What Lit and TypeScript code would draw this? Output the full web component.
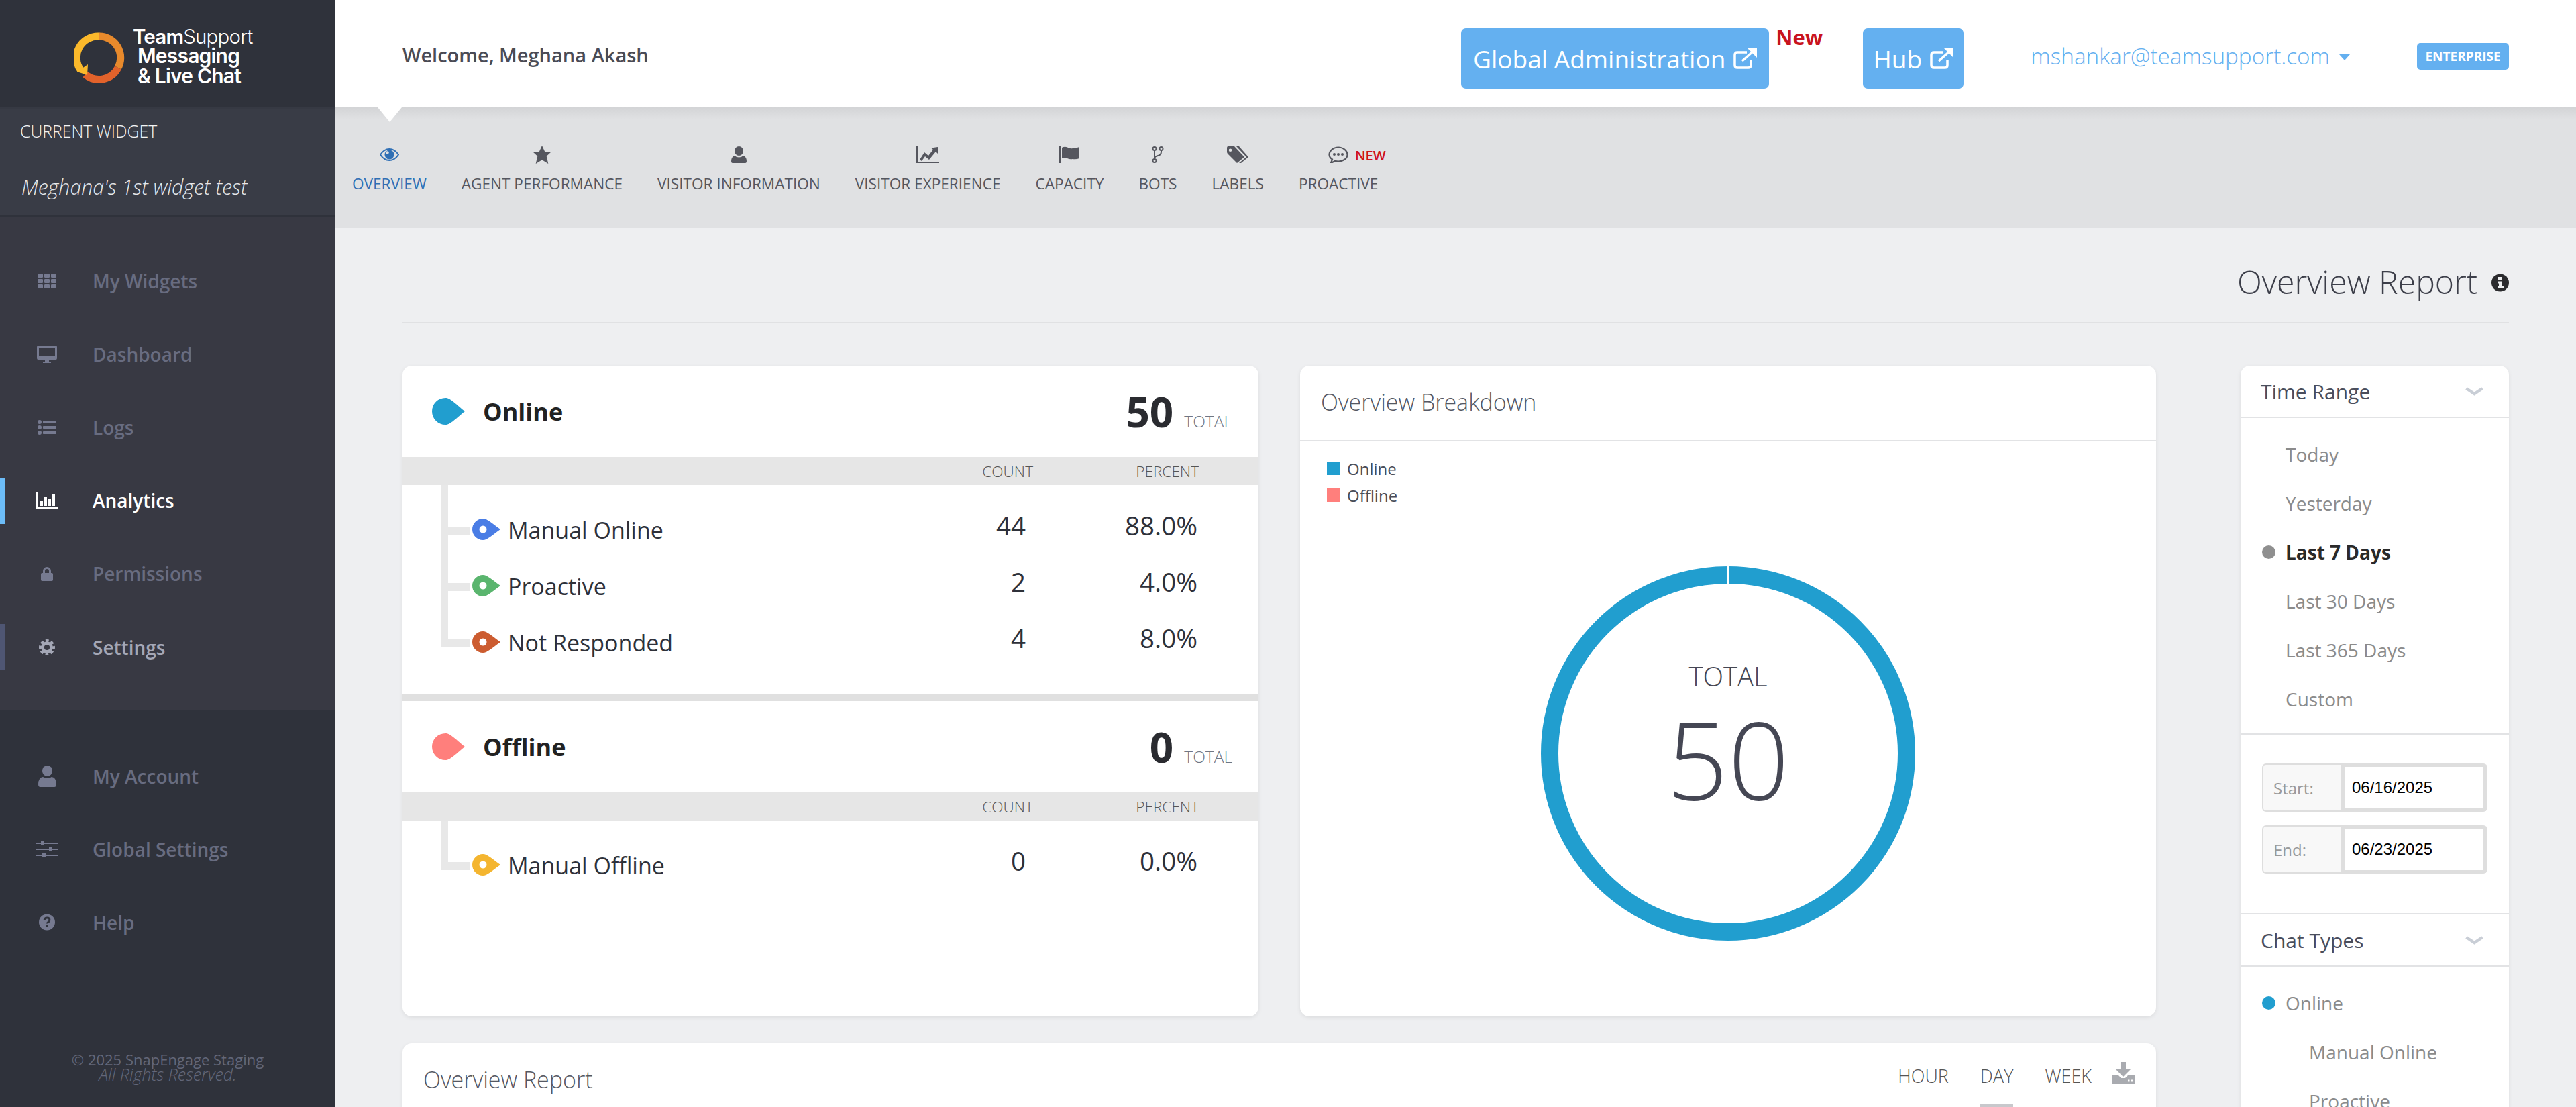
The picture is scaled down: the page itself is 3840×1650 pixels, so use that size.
import { LitElement, html, css, svg } from 'lit';
import { customElement } from 'lit/decorators.js';

const SANS = css`'Open Sans', 'Noto Sans', sans-serif`;

// icons, drawn by hand to follow the reference glyphs
const icons: Record<string, ReturnType<typeof svg>> = {
  grid: svg`<g fill="currentColor"><rect x="0" y="0" width="8" height="6" rx="1.2"/><rect x="10" y="0" width="8" height="6" rx="1.2"/><rect x="20" y="0" width="8" height="6" rx="1.2"/><rect x="0" y="8" width="8" height="6" rx="1.2"/><rect x="10" y="8" width="8" height="6" rx="1.2"/><rect x="20" y="8" width="8" height="6" rx="1.2"/><rect x="0" y="16" width="8" height="6" rx="1.2"/><rect x="10" y="16" width="8" height="6" rx="1.2"/><rect x="20" y="16" width="8" height="6" rx="1.2"/></g>`,
  desktop: svg`<path fill="currentColor" fill-rule="evenodd" d="M2 0H28Q30 0 30 2V19Q30 21 28 21H18V24H21V26H9V24H12V21H2Q0 21 0 19V2Q0 0 2 0ZM3 3V16H27V3Z"/>`,
  list: svg`<g fill="currentColor"><circle cx="3" cy="3" r="3"/><circle cx="3" cy="11" r="3"/><circle cx="3" cy="19" r="3"/><rect x="8" y="1" width="20" height="4" rx=".8"/><rect x="8" y="9" width="20" height="4" rx=".8"/><rect x="8" y="17" width="20" height="4" rx=".8"/></g>`,
  bars: svg`<g fill="currentColor"><path d="M0 0H2V22H32V24H0Z"/><rect x="6" y="13" width="4" height="7"/><rect x="12" y="7" width="4" height="13"/><rect x="18" y="10" width="4" height="10"/><rect x="24" y="3" width="4" height="17"/></g>`,
  lock: svg`<path fill="currentColor" fill-rule="evenodd" d="M3 10V7A6 6 0 0 1 15 7V10H16Q18 10 18 12V20Q18 22 16 22H2Q0 22 0 20V12Q0 10 2 10ZM6 10H12V7A3 3 0 0 0 6 7Z"/>`,
  gear: svg`<g fill="none" stroke="currentColor"><circle cx="12" cy="12" r="6.4" stroke-width="4.6"/><circle cx="12" cy="12" r="10" stroke-width="4" stroke-dasharray="4.6 3.25" stroke-dashoffset="2.3"/></g>`,
  user: svg`<g fill="currentColor"><ellipse cx="13.5" cy="8" rx="7.5" ry="8"/><path d="M3 32Q0 32 0 28Q0 18 7 17Q10 19 13.5 19Q17 19 20 17Q27 18 27 28Q27 32 24 32Z"/></g>`,
  sliders: svg`<g fill="currentColor"><rect x="0" y="3" width="32" height="2"/><rect x="0" y="12" width="32" height="2"/><rect x="0" y="21" width="32" height="2"/><rect x="7" y="0" width="5" height="7" rx="1"/><rect x="19" y="9" width="5" height="7" rx="1"/><rect x="8" y="18" width="6" height="7" rx="1"/></g>`,
  help: svg`<circle cx="12" cy="12.5" r="12" fill="currentColor"/><path d="M8 9.5Q8.5 6 12.2 6Q16 6 16 9.2Q16 11 14 12.2Q12.4 13.2 12.4 14.5" fill="none" stroke="var(--cut)" stroke-width="2.8"/><rect x="10.8" y="16.2" width="3.2" height="3.2" fill="var(--cut)"/>`,
  eye: svg`<path d="M1 9.5C5 3.5 9.5 1 14.5 1S24 3.5 28 9.5C24 15.5 19.5 18 14.5 18S5 15.5 1 9.5Z" fill="none" stroke="currentColor" stroke-width="2"/><circle cx="14.5" cy="9.5" r="7" fill="currentColor"/><circle cx="11.5" cy="6.5" r="2.2" fill="#e0e1e3"/>`,
  star: svg`<path fill="currentColor" d="M14 0L18.2 9H28L20.7 15.8L23.3 27L14 21.3L4.7 27L7.3 15.8L0 9H9.8Z"/>`,
  person: svg`<g fill="currentColor"><ellipse cx="11.5" cy="7" rx="6.5" ry="7"/><path d="M2 25Q0 25 0 22Q0 16 5 14Q8 16.5 11.5 16.5Q15 16.5 18 14Q23 16 23 22Q23 25 21 25Z"/></g>`,
  chart: svg`<g fill="currentColor"><path d="M0 0H2V23H34V25H0Z"/><path d="M5 20L12 9L18 14L25 5L22 2.5L32 1V11L29 8L19 20L13 15L8 22Z"/></g>`,
  flag: svg`<g fill="currentColor"><rect x="0" y="0" width="2.5" height="25"/><path d="M4 2Q8 0 12 1.5Q16 4 20 3Q25 3 30 1V18Q25 20 20 19Q16 20 12 18Q8 16.5 4 18Z"/></g>`,
  fork: svg`<g fill="none" stroke="currentColor" stroke-width="2"><circle cx="4" cy="3.5" r="2.5"/><circle cx="4" cy="21.5" r="2.5"/><circle cx="14" cy="3.5" r="2.5"/><path d="M4 6V19M14 6V8Q14 13 9 14Q5 15 4 17"/></g>`,
  tags: svg`<g fill="currentColor"><path fill-rule="evenodd" d="M0 2Q0 0 2 0H11L26 16L15 25L1 11Q0 10 0 8ZM5 3.5A2.3 2.3 0 1 0 5 8.1A2.3 2.3 0 1 0 5 3.5Z"/><path d="M14 0H18L32 16L21 25H18L29 16Z"/></g>`,
  comment: svg`<path d="M15 1.5C22.5 1.5 28.5 6.8 28.5 12.5S22.5 22.5 15 22.5C13.5 22.5 12 22.3 10.5 21.8L4 25L6 19.5C3 17.5 1.5 15 1.5 12.5C1.5 6.8 7.5 1.5 15 1.5Z" fill="none" stroke="currentColor" stroke-width="2.2"/><g fill="currentColor"><circle cx="9" cy="12" r="2"/><circle cx="15" cy="12" r="2"/><circle cx="21" cy="12" r="2"/></g>`,
  external: svg`<g fill="none" stroke="currentColor" stroke-width="3.5"><path d="M20 6H6Q2 6 2 10V25Q2 29 6 29H22Q26 29 26 25V17"/><path d="M13 19L31 3"/></g><path d="M21 0H35V14L30 9L26 5Z" fill="currentColor"/>`,
  info: svg`<circle cx="13" cy="13.5" r="13" fill="#2b2b2e"/><rect x="10" y="5" width="6" height="4.5" fill="#eeeff1"/><path d="M9 11.5H16V19H18V22H9V19H11V14.5H9Z" fill="#eeeff1"/>`,
  download: svg`<g fill="currentColor"><path d="M13 0H21V11H28L17 22L6 11H13Z"/><path fill-rule="evenodd" d="M0 20H10L14 24H20L24 20H34V32H0ZM24 26.5V28.5H26.5V26.5ZM28.5 26.5V28.5H31V26.5Z"/></g>`,
};

function icon(name: string, w: number, h: number, vb = `0 0 ${w} ${h}`) {
  return html`<svg class="icon" width=${w} height=${h} viewBox=${vb}>${icons[name]}</svg>`;
}

function marker(color: string) {
  return html`<svg class="marker" width="42" height="32" viewBox="0 0 42 32">
    <path fill=${color} d="M16 0C22 0 28 6 42 16C28 26 22 32 16 32A16 16 0 0 1 16 0Z" />
    <circle cx="16" cy="16" r="5.5" fill="#fff" />
  </svg>`;
}

function drop(color: string) {
  return html`<svg width="49" height="40" viewBox="0 0 49 40">
    <path fill=${color} d="M20 0C27 0 33 7 49 20C33 33 27 40 20 40A20 20 0 0 1 20 0Z" />
  </svg>`;
}

const chevron = html`<svg width="27" height="13" viewBox="0 0 27 13">
  <path d="M1.5 2L13.5 10L25.5 2" fill="none" stroke="#c9ced6" stroke-width="4.5" />
</svg>`;

@customElement('app-side')
class AppSide extends LitElement {
  static styles = css`
    :host {
      display: flex;
      flex-direction: column;
      width: 500px;
      flex: none;
      height: 1650px;
      background: #2f323b;
      font-family: ${SANS};
    }
    .logo {
      height: 160px;
      display: flex;
      align-items: center;
      padding-left: 110px;
      gap: 17px;
      box-sizing: border-box;
    }
    .logo svg {
      margin-top: 12px;
    }
    .logo-text {
      margin-top: 8px;
      font-family: Inter, sans-serif;
      color: #fff;
      font-size: 30px;
      line-height: 29.5px;
      font-weight: 600;
      letter-spacing: -0.8px;
    }
    .logo-text .brand {
      margin-left: -7px;
      font-size: 29.5px;
    }
    .logo-text .brand span {
      font-weight: 300;
    }
    .current {
      height: 164px;
      box-sizing: border-box;
      background: #393c46;
      border-top: 3px solid #363943;
      border-bottom: 4px solid #2f323b;
      padding: 15px 0 0 30px;
      color: #fff;
    }
    .current-label {
      font-size: 24.8px;
      line-height: 34px;
      font-weight: 300;
      color: #f2f3f5;
    }
    .current-name {
      margin: 47px 0 0 2px;
      font-size: 30.3px;
      line-height: 40px;
      font-style: italic;
      font-weight: 300;
      color: #e6e7ea;
    }
    .top-nav {
      background: #383943;
      height: 734px;
      padding-top: 40px;
      box-sizing: border-box;
    }
    .bottom-nav {
      padding-top: 44px;
    }
    .item {
      position: relative;
      height: 109.2px;
      display: flex;
      align-items: center;
      color: #686c80;
      font-size: 28px;
      font-weight: 600;
    }
    .item.on {
      color: #fff;
    }
    .item.sub {
      color: #a4a7b6;
    }
    .item.on::before,
    .item.sub::before {
      content: '';
      position: absolute;
      left: 0;
      top: 20px;
      bottom: 20px;
      width: 8px;
      background: #6cbcf7;
    }
    .item.sub::before {
      background: #4f5673;
    }
    .item-icon {
      width: 140px;
      margin-right: -2px;
      display: flex;
      justify-content: center;
      flex: none;
      color: #767a90;
      --cut: #2f323b;
    }
    .item.on .item-icon {
      color: #fff;
    }
    .item.sub .item-icon {
      color: #a4a7b6;
    }
    .icon {
      display: block;
    }
    .foot {
      margin-top: auto;
      padding-bottom: 38px;
      text-align: center;
      color: #636779;
      font-size: 22px;
      line-height: 22px;
    }
    .foot em {
      display: block;
      font-size: 25px;
      font-weight: 300;
    }
  `;

  render() {
    const top = [
      ['My Widgets', 'grid', 28, 22, ''],
      ['Dashboard', 'desktop', 30, 26, ''],
      ['Logs', 'list', 28, 22, ''],
      ['Analytics', 'bars', 32, 24, 'on'],
      ['Permissions', 'lock', 18, 22, ''],
      ['Settings', 'gear', 24, 24, 'sub'],
    ] as const;
    const bottom = [
      ['My Account', 'user', 27, 32],
      ['Global Settings', 'sliders', 32, 25],
      ['Help', 'help', 24, 25],
    ] as const;
    return html`
      <div class="logo">
        <svg width="78" height="76" viewBox="0 0 78 76">
          <g fill="none" stroke-width="11">
            <path d="M10.5 57A32 32 0 0 1 38 6" stroke="#fbb92b" />
            <path d="M38 6A32 32 0 0 1 66 53" stroke="#e88a2c" />
            <path d="M66 53A32 32 0 0 1 17 63" stroke="#e2622b" />
          </g>
          <path d="M5 59L21 48L20 64Z" fill="#fbb92b" />
        </svg>
        <div class="logo-text">
          <div class="brand">Team<span>Support</span></div>
          <div>Messaging</div>
          <div>&amp; Live Chat</div>
        </div>
      </div>
      <div class="current">
        <div class="current-label">CURRENT WIDGET</div>
        <div class="current-name">Meghana's 1st widget test</div>
      </div>
      <div class="top-nav">
        ${top.map(
          ([label, name, w, h, cls]) => html`<div class="item ${cls}">
            <span class="item-icon" style="--cut:#383943">${icon(name, w, h)}</span>${label}
          </div>`
        )}
      </div>
      <div class="bottom-nav">
        ${bottom.map(
          ([label, name, w, h]) => html`<div class="item">
            <span class="item-icon">${icon(name, w, h)}</span>${label}
          </div>`
        )}
      </div>
      <div class="foot">
        © 2025 SnapEngage Staging
        <em>All Rights Reserved.</em>
      </div>
    `;
  }
}

@customElement('app-top')
class AppTop extends LitElement {
  static styles = css`
    :host {
      display: block;
      font-family: ${SANS};
    }
    header {
      height: 160px;
      background: #fff;
      display: flex;
      align-items: center;
      padding: 0 100px;
    }
    .welcome {
      font-size: 29px;
      font-weight: 600;
      color: #4a4b55;
      margin-top: 3px;
    }
    .btn {
      display: flex;
      align-items: center;
      justify-content: center;
      width: 150px;
      height: 90px;
      box-sizing: border-box;
      background: #64b0f0;
      color: #fff;
      border-radius: 7px;
      font-size: 37px;
      font-weight: 500;
      gap: 12px;
      margin-top: 14px;
    }
    .btn.admin {
      width: 459px;
      margin-left: auto;
    }
    .new {
      align-self: flex-start;
      margin: 33px 60px 0 10px;
      color: #c9141e;
      font-size: 31px;
      font-weight: 700;
      line-height: 44px;
    }
    .email {
      margin-left: 100px;
      color: #64b0f0;
      font-size: 33.3px;
      font-weight: 300;
      display: flex;
      align-items: center;
      gap: 14px;
      margin-top: 5px;
    }
    .caret {
      width: 0;
      height: 0;
      border-left: 8px solid transparent;
      border-right: 8px solid transparent;
      border-top: 9px solid #64b0f0;
      margin-top: 5px;
    }
    .badge {
      margin-left: 100px;
      width: 137px;
      height: 40px;
      background: #64b0f0;
      color: #fff;
      border-radius: 5px;
      font-size: 19px;
      font-weight: 700;
      display: flex;
      align-items: center;
      justify-content: center;
      margin-top: 8px;
    }
    nav {
      position: relative;
      height: 180px;
      box-sizing: border-box;
      background: linear-gradient(#d3d4d6, #e0e1e3 18px);
      display: flex;
      gap: 52px;
      padding: 56px 0 0 25px;
    }
    .pointer {
      position: absolute;
      left: 63px;
      top: 0;
      width: 0;
      height: 0;
      border-left: 18px solid transparent;
      border-right: 18px solid transparent;
      border-top: 22px solid #fff;
    }
    .tab {
      position: relative;
      display: flex;
      flex-direction: column;
      align-items: center;
      color: #55565e;
      font-size: 22.6px;
      line-height: 30px;
      font-weight: 500;
      white-space: nowrap;
    }
    .tab.on {
      color: #2f6fb5;
    }
    .tab-icon {
      height: 28px;
      display: flex;
      align-items: center;
      margin-bottom: 15px;
    }
    .tag-new {
      position: absolute;
      left: 84px;
      top: 1px;
      color: #d0121c;
      font-size: 20px;
      font-weight: 600;
    }
    .icon {
      display: block;
    }
  `;

  render() {
    const tabs = [
      ['OVERVIEW', 'eye', 29, 19],
      ['AGENT PERFORMANCE', 'star', 28, 27],
      ['VISITOR INFORMATION', 'person', 23, 25],
      ['VISITOR EXPERIENCE', 'chart', 34, 25],
      ['CAPACITY', 'flag', 30, 25],
      ['BOTS', 'fork', 18, 25],
      ['LABELS', 'tags', 32, 25],
      ['PROACTIVE', 'comment', 30, 25],
    ] as const;
    return html`
      <header>
        <div class="welcome">Welcome, Meghana Akash</div>
        <div class="btn admin">Global Administration ${icon('external', 35, 31)}</div>
        <div class="new">New</div>
        <div class="btn">Hub ${icon('external', 35, 31)}</div>
        <div class="email">mshankar@teamsupport.com <span class="caret"></span></div>
        <div class="badge">ENTERPRISE</div>
      </header>
      <nav>
        <span class="pointer"></span>
        ${tabs.map(
          ([label, name, w, h], i) => html`<div class="tab ${i === 0 ? 'on' : ''}">
            <span class="tab-icon">${icon(name, w, h)}</span>${label}
            ${label === 'PROACTIVE' ? html`<span class="tag-new">NEW</span>` : ''}
          </div>`
        )}
      </nav>
    `;
  }
}

type Row = { name: string; color: string; count: number; pct: string };

@customElement('stat-card')
class StatCard extends LitElement {
  static styles = css`
    :host {
      display: block;
      width: 1276px;
      height: 970px;
      background: #fff;
      border-radius: 14px;
      box-shadow: 0 2px 6px rgba(0, 0, 0, 0.08);
      overflow: hidden;
      font-family: ${SANS};
      color: #2e313a;
    }
    .head {
      height: 136px;
      display: flex;
      align-items: center;
      padding: 0 39px 0 44px;
    }
    .head-name {
      margin-left: 27px;
      font-size: 36px;
      font-weight: 700;
      color: #222;
    }
    .head-total {
      margin-left: auto;
      display: flex;
      align-items: baseline;
      gap: 16px;
      font-size: 62px;
      font-weight: 700;
      color: #2a2b30;
    }
    .head-total small {
      font-size: 24.5px;
      font-weight: 300;
      color: #6f7785;
    }
    .cols {
      height: 42px;
      background: #e6e6e6;
      display: grid;
      grid-template-columns: 1fr auto 247px;
      align-items: center;
      padding-right: 89px;
      font-size: 22.6px;
      font-weight: 300;
      color: #555;
      text-align: right;
    }
    .rows {
      position: relative;
      padding-top: 25px;
      height: 312px;
      box-sizing: border-box;
    }
    .rows::before {
      content: '';
      position: absolute;
      left: 58px;
      top: 0;
      bottom: 70px;
      width: 10px;
      background: #e8e8e8;
    }
    .rows.single {
      height: 292px;
    }
    .rows.single::before {
      bottom: 218px;
    }
    .row {
      position: relative;
      height: 84px;
      display: grid;
      grid-template-columns: 42px 1fr auto 256px;
      align-items: center;
      padding: 0 91px 0 104px;
      font-size: 34px;
    }
    .row::before {
      content: '';
      position: absolute;
      left: 58px;
      top: 37px;
      width: 42px;
      height: 12px;
      background: #e8e8e8;
    }
    .marker {
      display: block;
      margin-top: -2px;
    }
    .row-name {
      margin-left: 11px;
      font-weight: 400;
    }
    .num {
      text-align: right;
      font-size: 38.5px;
      font-weight: 500;
      margin-top: -14px;
    }
    .divider {
      height: 10px;
      background: #e0e0e0;
    }
  `;

  render() {
    const online: Row[] = [
      { name: 'Manual Online', color: '#4a7de5', count: 44, pct: '88.0%' },
      { name: 'Proactive', color: '#5ab56e', count: 2, pct: '4.0%' },
      { name: 'Not Responded', color: '#cc5c30', count: 4, pct: '8.0%' },
    ];
    const offline: Row[] = [{ name: 'Manual Offline', color: '#f4b52f', count: 0, pct: '0.0%' }];
    const block = (name: string, color: string, total: number, rows: Row[], cls: string) => html`
      <div class="head">
        ${drop(color)}
        <span class="head-name">${name}</span>
        <span class="head-total">${total} <small>TOTAL</small></span>
      </div>
      <div class="cols"><span></span><span>COUNT</span><span>PERCENT</span></div>
      <div class="rows ${cls}">
        ${rows.map(
          (r) => html`<div class="row">
            ${marker(r.color)}
            <span class="row-name">${r.name}</span>
            <span class="num">${r.count}</span>
            <span class="num">${r.pct}</span>
          </div>`
        )}
      </div>
    `;
    return html`
      ${block('Online', '#219ecf', 50, online, '')}
      <div class="divider"></div>
      ${block('Offline', '#ff7f7c', 0, offline, 'single')}
    `;
  }
}

@customElement('donut-card')
class DonutCard extends LitElement {
  static styles = css`
    :host {
      display: block;
      width: 1276px;
      height: 970px;
      background: #fff;
      border-radius: 14px;
      box-shadow: 0 2px 6px rgba(0, 0, 0, 0.08);
      font-family: ${SANS};
    }
    .title {
      height: 113px;
      box-sizing: border-box;
      border-bottom: 2px solid #e2e3e5;
      display: flex;
      align-items: center;
      padding: 0 0 4px 31px;
      font-size: 34px;
      font-weight: 300;
      color: #555863;
    }
    .legend {
      padding: 20px 0 0 40px;
      height: 186px;
      box-sizing: border-box;
    }
    .key {
      display: flex;
      align-items: center;
      gap: 10px;
      height: 40px;
      font-size: 24px;
      color: #4a4d58;
    }
    .swatch {
      width: 20px;
      height: 20px;
    }
    .ring {
      position: relative;
      width: 558px;
      height: 558px;
      margin: 0 auto;
      box-sizing: border-box;
      display: flex;
      flex-direction: column;
      align-items: center;
      color: #454754;
      font-weight: 300;
    }
    .ring svg {
      position: absolute;
      left: 0;
      top: 0;
    }
    .ring-label {
      margin-top: 136px;
      font-size: 40px;
      line-height: 56px;
    }
    .ring-value {
      font-size: 160px;
      line-height: 180px;
      margin-top: 4px;
    }
  `;

  render() {
    return html`
      <div class="title">Overview Breakdown</div>
      <div class="legend">
        <div class="key"><span class="swatch" style="background:#219ecf"></span>Online</div>
        <div class="key"><span class="swatch" style="background:#ff7f7c"></span>Offline</div>
      </div>
      <div class="ring">
        <svg width="558" height="558" viewBox="0 0 558 558">
          <circle cx="279" cy="279" r="266" fill="none" stroke="#219ecf" stroke-width="26" />
          <rect x="278" y="0" width="2" height="27" fill="#fff" />
        </svg>
        <div class="ring-label">TOTAL</div>
        <div class="ring-value">50</div>
      </div>
    `;
  }
}

@customElement('filter-panel')
class FilterPanel extends LitElement {
  static styles = css`
    :host {
      display: block;
      width: 400px;
      flex: none;
      background: #fff;
      border-radius: 14px 14px 0 0;
      box-shadow: 0 2px 6px rgba(0, 0, 0, 0.08);
      font-family: ${SANS};
      font-size: 28px;
      color: #8b8b8b;
    }
    .head {
      height: 78px;
      box-sizing: border-box;
      border-bottom: 2px solid #e2e3e5;
      display: flex;
      align-items: center;
      justify-content: space-between;
      padding: 0 38px 0 30px;
      font-size: 30px;
      color: #4a4e5c;
    }
    .list {
      padding: 17px 0 15px;
      border-bottom: 2px solid #e2e3e5;
    }
    .list.open {
      border-bottom: 0;
    }
    .opt {
      position: relative;
      height: 73px;
      display: flex;
      align-items: center;
      padding-left: 67px;
    }
    .opt.child {
      padding-left: 102px;
    }
    .opt.on {
      color: #2a2a2a;
      font-weight: 700;
    }
    .dot {
      position: absolute;
      left: 32px;
      top: 27px;
      width: 20px;
      height: 20px;
      border-radius: 50%;
      background: #8f8f8f;
    }
    .dot.blue {
      background: #219ecf;
    }
    .dates {
      padding: 43px 32px 0;
      height: 268px;
      box-sizing: border-box;
      border-bottom: 2px solid #e2e3e5;
    }
    .date {
      display: flex;
      height: 72px;
      margin-bottom: 20px;
      background: #dedede;
      border-radius: 6px;
      padding: 2px 6px 2px 2px;
      box-sizing: border-box;
    }
    .date label {
      width: 115px;
      box-sizing: border-box;
      padding-left: 15px;
      background: #f8f8f8;
      display: flex;
      align-items: center;
      font-size: 24px;
      color: #999;
      border-radius: 4px 0 0 4px;
    }
    .date input {
      width: 207px;
      margin: 3px 0 3px 6px;
      border: 0;
      padding: 0 0 0 11px;
      box-sizing: border-box;
      background: #fff;
      font-family: 'Liberation Sans', Arial, sans-serif;
      font-size: 24px;
      color: #000;
    }
  `;

  render() {
    const ranges = ['Today', 'Yesterday', 'Last 7 Days', 'Last 30 Days', 'Last 365 Days', 'Custom'];
    return html`
      <div class="head">Time Range ${chevron}</div>
      <div class="list">
        ${ranges.map(
          (r) => html`<div class="opt ${r === 'Last 7 Days' ? 'on' : ''}">
            ${r === 'Last 7 Days' ? html`<span class="dot"></span>` : ''}${r}
          </div>`
        )}
      </div>
      <div class="dates">
        <div class="date"><label>Start:</label><input value="06/16/2025" /></div>
        <div class="date"><label>End:</label><input value="06/23/2025" /></div>
      </div>
      <div class="head">Chat Types ${chevron}</div>
      <div class="list open">
        <div class="opt"><span class="dot blue"></span>Online</div>
        <div class="opt child">Manual Online</div>
        <div class="opt child">Proactive</div>
      </div>
    `;
  }
}

@customElement('app-root')
export class AppRoot extends LitElement {
  static styles = css`
    :host {
      display: flex;
      width: 3840px;
      height: 1650px;
      overflow: hidden;
      background: #eeeff1;
      font-family: ${SANS};
    }
    main {
      flex: 1;
      min-width: 0;
    }
    .content {
      padding: 22px 100px 0;
    }
    .title {
      height: 118px;
      box-sizing: content-box;
      border-bottom: 2px solid #e0e1e3;
      display: flex;
      align-items: center;
      justify-content: flex-end;
      gap: 21px;
      font-size: 48.2px;
      font-weight: 300;
      color: #3d3f4a;
      margin-bottom: 63px;
    }
    .title-text {
      margin-top: -4px;
    }
    .columns {
      display: flex;
      gap: 126px;
    }
    .left {
      width: 2614px;
      flex: none;
    }
    .pair {
      display: flex;
      gap: 62px;
      margin-bottom: 40px;
    }
    .report {
      height: 300px;
      background: #fff;
      border-radius: 14px;
      box-shadow: 0 2px 6px rgba(0, 0, 0, 0.08);
      display: flex;
      padding: 28px 32px 0 31px;
      box-sizing: border-box;
    }
    .report h2 {
      margin: -2px 0 0;
      font-size: 34px;
      line-height: 56px;
      font-weight: 300;
      color: #555863;
    }
    .ranges {
      margin-left: auto;
      display: flex;
      gap: 47px;
      font-size: 27px;
      line-height: 42px;
      font-weight: 300;
      color: #555;
    }
    .ranges span {
      position: relative;
    }
    .ranges .on::after {
      content: '';
      position: absolute;
      left: 0;
      right: 0;
      top: 63px;
      height: 6px;
      background: #c8c8cc;
    }
    .dl {
      margin-left: 30px;
      color: #a9abb0;
    }
    .icon {
      display: block;
    }
  `;

  render() {
    return html`
      <app-side></app-side>
      <main>
        <app-top></app-top>
        <div class="content">
          <div class="title"><span class="title-text">Overview Report</span> ${icon('info', 26, 27)}</div>
          <div class="columns">
            <div class="left">
              <div class="pair">
                <stat-card></stat-card>
                <donut-card></donut-card>
              </div>
              <div class="report">
                <h2>Overview Report</h2>
                <div class="ranges">
                  <span>HOUR</span><span class="on">DAY</span><span>WEEK</span>
                </div>
                <span class="dl">${icon('download', 34, 32)}</span>
              </div>
            </div>
            <filter-panel></filter-panel>
          </div>
        </div>
      </main>
    `;
  }
}
